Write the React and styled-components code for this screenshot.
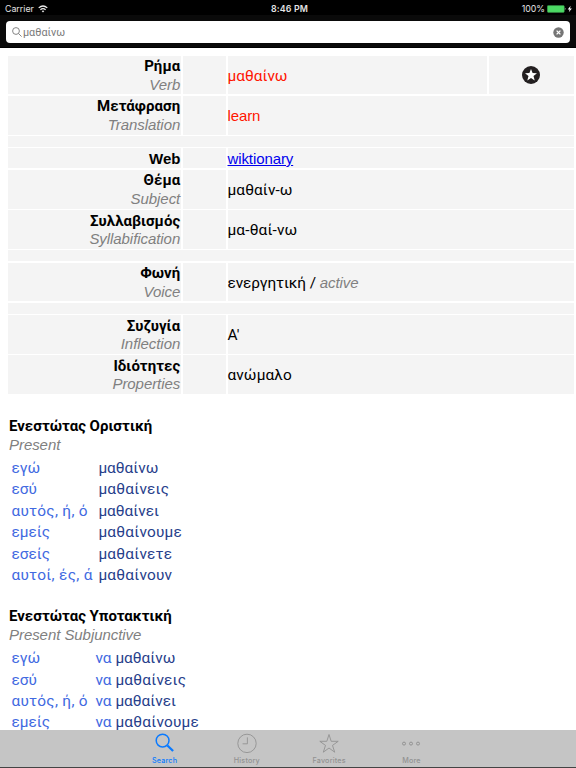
import React from "react";
import styled, { createGlobalStyle } from "styled-components";

const GlobalStyle = createGlobalStyle`
  html, body {
    margin: 0;
    padding: 0;
    background: #fff;
  }
  * {
    box-sizing: border-box;
  }
`;

const Screen = styled.div`
  width: 576px;
  height: 768px;
  display: flex;
  flex-direction: column;
  overflow: hidden;
  background: #fff;
  font-family: Inter, "Liberation Sans", sans-serif;
`;

const StatusBar = styled.div`
  flex: none;
  height: 15px;
  display: grid;
  grid-template-columns: 1fr auto 1fr;
  align-items: center;
  padding: 2px 3px 0 5px;
  background: #000;
  color: #e4e4e4;
  font-size: 8.8px;
  line-height: 13px;
`;

const StatusGroup = styled.div`
  display: flex;
  align-items: center;
  justify-content: ${(props) => (props.$end ? "flex-end" : "flex-start")};
  gap: ${(props) => (props.$end ? 2 : 4)}px;
`;

const Clock = styled.div`
  padding-left: 1px;
  font-weight: 600;
  letter-spacing: 0.15px;
`;

const SearchBar = styled.div`
  flex: none;
  height: 33px;
  padding: 6px 6px 5px;
  background: #0a0a0a;
  border-bottom: 1px solid #000;
`;

const SearchField = styled.div`
  height: 22px;
  display: flex;
  align-items: center;
  padding: 0 6px;
  border-radius: 4px;
  background: #fff;
  color: #7a7a7a;
  font-family: Roboto, sans-serif;
  font-size: 10.8px;
`;

const Query = styled.span`
  flex: 1;
  margin-left: 1px;
`;

const Content = styled.main`
  flex: 1;
  min-height: 0;
  overflow: hidden;
  padding: 7.7px 2px 0 8px;
`;

const InfoTable = styled.div`
  display: flex;
  flex-direction: column;
  gap: 1.46px;
`;

const InfoRow = styled.div`
  display: grid;
  grid-template-columns: ${(props) =>
    props.$star ? "173px 43.5px 259.5px 1fr" : "173px 43.5px 1fr"};
  gap: 1.5px;
  height: ${(props) => (props.$short ? 20 : 38.7)}px;
`;

const Spacer = styled.div`
  height: 11px;
  background: #f4f4f4;
`;

const Cell = styled.div`
  display: flex;
  flex-direction: column;
  justify-content: center;
  align-items: ${(props) => props.$align || "flex-start"};
  padding-top: ${(props) => props.$top || 0}px;
  padding-right: ${(props) => (props.$align === "flex-end" ? 0.8 : 0)}px;
  background: #f4f4f4;
  white-space: nowrap;
`;

const Greek = styled.div`
  font-family: Roboto, sans-serif;
  font-size: ${(props) => (props.$bold ? 15 : 15.4)}px;
  line-height: 18.5px;
  font-weight: ${(props) => (props.$bold ? 700 : 400)};
  color: ${(props) => props.$color || "#000"};
  letter-spacing: ${(props) => props.$spacing ?? (props.$bold ? 0.05 : 0.1)}px;
`;

const English = styled.div`
  font-family: "Liberation Sans", Arial, sans-serif;
  font-size: 15px;
  line-height: 18px;
  letter-spacing: -0.1px;
  color: ${(props) => props.$color || "#000"};
  font-weight: ${(props) => (props.$bold ? 700 : 400)};
`;

const Gloss = styled.span`
  font-family: "Liberation Sans", Arial, sans-serif;
  font-size: 15px;
  line-height: 18px;
  font-style: italic;
  letter-spacing: -0.06px;
  color: #808080;
`;

const WebLink = styled.a`
  font-family: "Liberation Sans", Arial, sans-serif;
  font-size: 15px;
  line-height: 18px;
  letter-spacing: -0.1px;
  color: #0000ee;
  text-decoration: underline;
`;

const Tense = styled.section`
  padding: ${(props) => props.$top}px 0 0 1px;
`;

const TenseHeading = styled.div`
  display: flex;
  flex-direction: column;
  margin-bottom: 4px;
`;

const Forms = styled.div`
  display: grid;
  grid-template-columns: ${(props) =>
    props.$particle ? "84px 20px auto" : "87px auto"};
  grid-auto-rows: 21.4px;
  align-items: center;
  padding-left: 2.4px;
  white-space: nowrap;
`;

const TabBar = styled.nav`
  flex: none;
  height: 38px;
  display: flex;
  justify-content: center;
  padding-top: 3px;
  background: #c5c5c5;
  border-bottom: 1px solid #444;
`;

const Tab = styled.div`
  width: 82.3px;
  display: flex;
  flex-direction: column;
  align-items: center;
  color: ${(props) => (props.$active ? "#0a7aff" : "#929292")};
  font-size: 7.2px;
  line-height: 9px;
  letter-spacing: 0.2px;
  font-weight: 500;
  svg {
    height: 22px;
    margin-bottom: 1px;
  }
`;

const WifiIcon = () => (
  <svg width="10" height="8" viewBox="0 0 10 8" fill="none" stroke="#eee" strokeWidth="1.2">
    <path d="M0.7 2.9Q5 -0.9 9.3 2.9M2.4 4.7Q5 2.5 7.6 4.7" />
    <path d="M3.7 6.1Q5 5 6.3 6.1L5 7.6Z" fill="#eee" stroke="none" />
  </svg>
);

const BatteryIcon = () => (
  <svg width="26" height="8" viewBox="0 0 26 8">
    <rect x="0.3" y="0.6" width="17" height="6.8" rx="0.8" fill="#4cd964" stroke="#3a8f48" strokeWidth="0.4" />
    <path d="M17.9 2.6q1.3 1.3 0 2.7z" fill="#ddd" />
    <path d="M23.6 0.8L20.7 4.4H22.6L21.8 7.2L24.9 3.5H23z" fill="#fff" />
  </svg>
);

const LensIcon = () => (
  <svg width="10" height="10" viewBox="0 0 10 10" fill="none" stroke="#777" strokeWidth="0.9">
    <circle cx="4" cy="4" r="3.4" />
    <path d="M6.5 6.5L9.6 9.6" />
  </svg>
);

const ClearIcon = () => (
  <svg width="11" height="11" viewBox="0 0 11 11">
    <circle cx="5.5" cy="5.5" r="5.2" fill="#757575" />
    <path d="M3.6 3.6L7.4 7.4M7.4 3.6L3.6 7.4" stroke="#fff" strokeWidth="1.3" />
  </svg>
);

const StarBadge = () => (
  <svg width="18" height="18" viewBox="0 0 18 18">
    <circle cx="9" cy="9" r="9" fill="#231f20" />
    <path
      d="M9 2.9L10.6 7.1L15 7.3L11.5 10L12.7 14.4L9 11.9L5.3 14.4L6.5 10L3 7.3L7.4 7.1Z"
      fill="#fff"
    />
  </svg>
);

const SearchTabIcon = () => (
  <svg width="20" viewBox="0 0 20 22" fill="none" stroke="currentColor">
    <circle cx="7.6" cy="7.6" r="6.4" strokeWidth="1.5" />
    <path d="M12.4 12.5L18.1 18" strokeWidth="2.3" />
  </svg>
);

const HistoryIcon = () => (
  <svg width="20" viewBox="0 0 20 22" fill="none" stroke="currentColor" strokeWidth="0.9">
    <circle cx="10" cy="10.4" r="9.2" />
    <path d="M10.4 4.4V10.8H5.6" />
  </svg>
);

const FavoritesIcon = () => (
  <svg width="20" viewBox="0 0 20 22" fill="none" stroke="currentColor" strokeWidth="0.9">
    <path d="M10 1.5L12.2 8.3H19.2L13.5 12.4L15.7 19.2L10 15L4.3 19.2L6.5 12.4L0.8 8.3H7.8Z" />
  </svg>
);

const MoreIcon = () => (
  <svg width="20" viewBox="0 0 20 22" fill="none" stroke="currentColor" strokeWidth="1">
    <circle cx="3" cy="10.6" r="1.5" />
    <circle cx="10" cy="10.6" r="1.5" />
    <circle cx="17" cy="10.6" r="1.5" />
  </svg>
);

const tabs = [
  { label: "Search", Icon: SearchTabIcon, active: true },
  { label: "History", Icon: HistoryIcon },
  { label: "Favorites", Icon: FavoritesIcon },
  { label: "More", Icon: MoreIcon },
];

const present = [
  ["εγώ", "μαθαίνω"],
  ["εσύ", "μαθαίνεις"],
  ["αυτός, ή, ό", "μαθαίνει"],
  ["εμείς", "μαθαίνουμε"],
  ["εσείς", "μαθαίνετε"],
  ["αυτοί, ές, ά", "μαθαίνουν"],
];

const Info = ({ greek, english, star, children }) => (
  <InfoRow $star={star}>
    <Cell $align="flex-end" $top={1}>
      <Greek $bold>{greek}</Greek>
      <Gloss>{english}</Gloss>
    </Cell>
    <Cell />
    <Cell $top={2}>{children}</Cell>
    {star && (
      <Cell $align="center">
        <StarBadge />
      </Cell>
    )}
  </InfoRow>
);

const Conjugation = ({ greek, english, particle, top, forms }) => (
  <Tense $top={top}>
    <TenseHeading>
      <Greek $bold $spacing={0}>{greek}</Greek>
      <Gloss>{english}</Gloss>
    </TenseHeading>
    <Forms $particle={particle}>
      {forms.map(([pronoun, verb]) => (
        <React.Fragment key={pronoun}>
          <Greek $color="#4169e1" $spacing={pronoun.includes(",") ? 0.3 : 0}>
            {pronoun}
          </Greek>
          {particle && <Greek $color="#4169e1">{particle}</Greek>}
          <Greek $color="#27408b" $spacing={verb.length > 8 ? 0.22 : 0}>
            {verb}
          </Greek>
        </React.Fragment>
      ))}
    </Forms>
  </Tense>
);

export default function App() {
  return (
    <Screen>
      <GlobalStyle />
      <StatusBar>
        <StatusGroup>
          <span>Carrier</span>
          <WifiIcon />
        </StatusGroup>
        <Clock>8:46 PM</Clock>
        <StatusGroup $end>
          <span>100%</span>
          <BatteryIcon />
        </StatusGroup>
      </StatusBar>
      <SearchBar>
        <SearchField>
          <LensIcon />
          <Query>μαθαίνω</Query>
          <ClearIcon />
        </SearchField>
      </SearchBar>
      <Content>
        <InfoTable>
          <Info greek="Ρήμα" english="Verb" star>
            <Greek $color="#ff1500" $spacing={0}>μαθαίνω</Greek>
          </Info>
          <Info greek="Μετάφραση" english="Translation">
            <English $color="#ff1500">learn</English>
          </Info>
          <Spacer />
          <InfoRow $short>
            <Cell $align="flex-end" $top={1}>
              <English $bold>Web</English>
            </Cell>
            <Cell />
            <Cell $top={1}>
              <WebLink>wiktionary</WebLink>
            </Cell>
          </InfoRow>
          <Info greek="Θέμα" english="Subject">
            <Greek>μαθαίν-ω</Greek>
          </Info>
          <Info greek="Συλλαβισμός" english="Syllabification">
            <Greek $spacing={0.15}>μα-θαί-νω</Greek>
          </Info>
          <Spacer />
          <Info greek="Φωνή" english="Voice">
            <Greek $spacing={-0.1}>
              ενεργητική / <Gloss>active</Gloss>
            </Greek>
          </Info>
          <Spacer />
          <Info greek="Συζυγία" english="Inflection">
            <Greek>Α'</Greek>
          </Info>
          <Info greek="Ιδιότητες" english="Properties">
            <Greek>ανώμαλο</Greek>
          </Info>
        </InfoTable>
        <Conjugation
          top={23}
          greek="Ενεστώτας Οριστική"
          english="Present"
          forms={present}
        />
        <Conjugation
          top={21.5}
          greek="Ενεστώτας Υποτακτική"
          english="Present Subjunctive"
          particle="να"
          forms={present.slice(0, 4)}
        />
      </Content>
      <TabBar>
        {tabs.map(({ label, Icon, active }) => (
          <Tab key={label} $active={active}>
            <Icon />
            {label}
          </Tab>
        ))}
      </TabBar>
    </Screen>
  );
}
